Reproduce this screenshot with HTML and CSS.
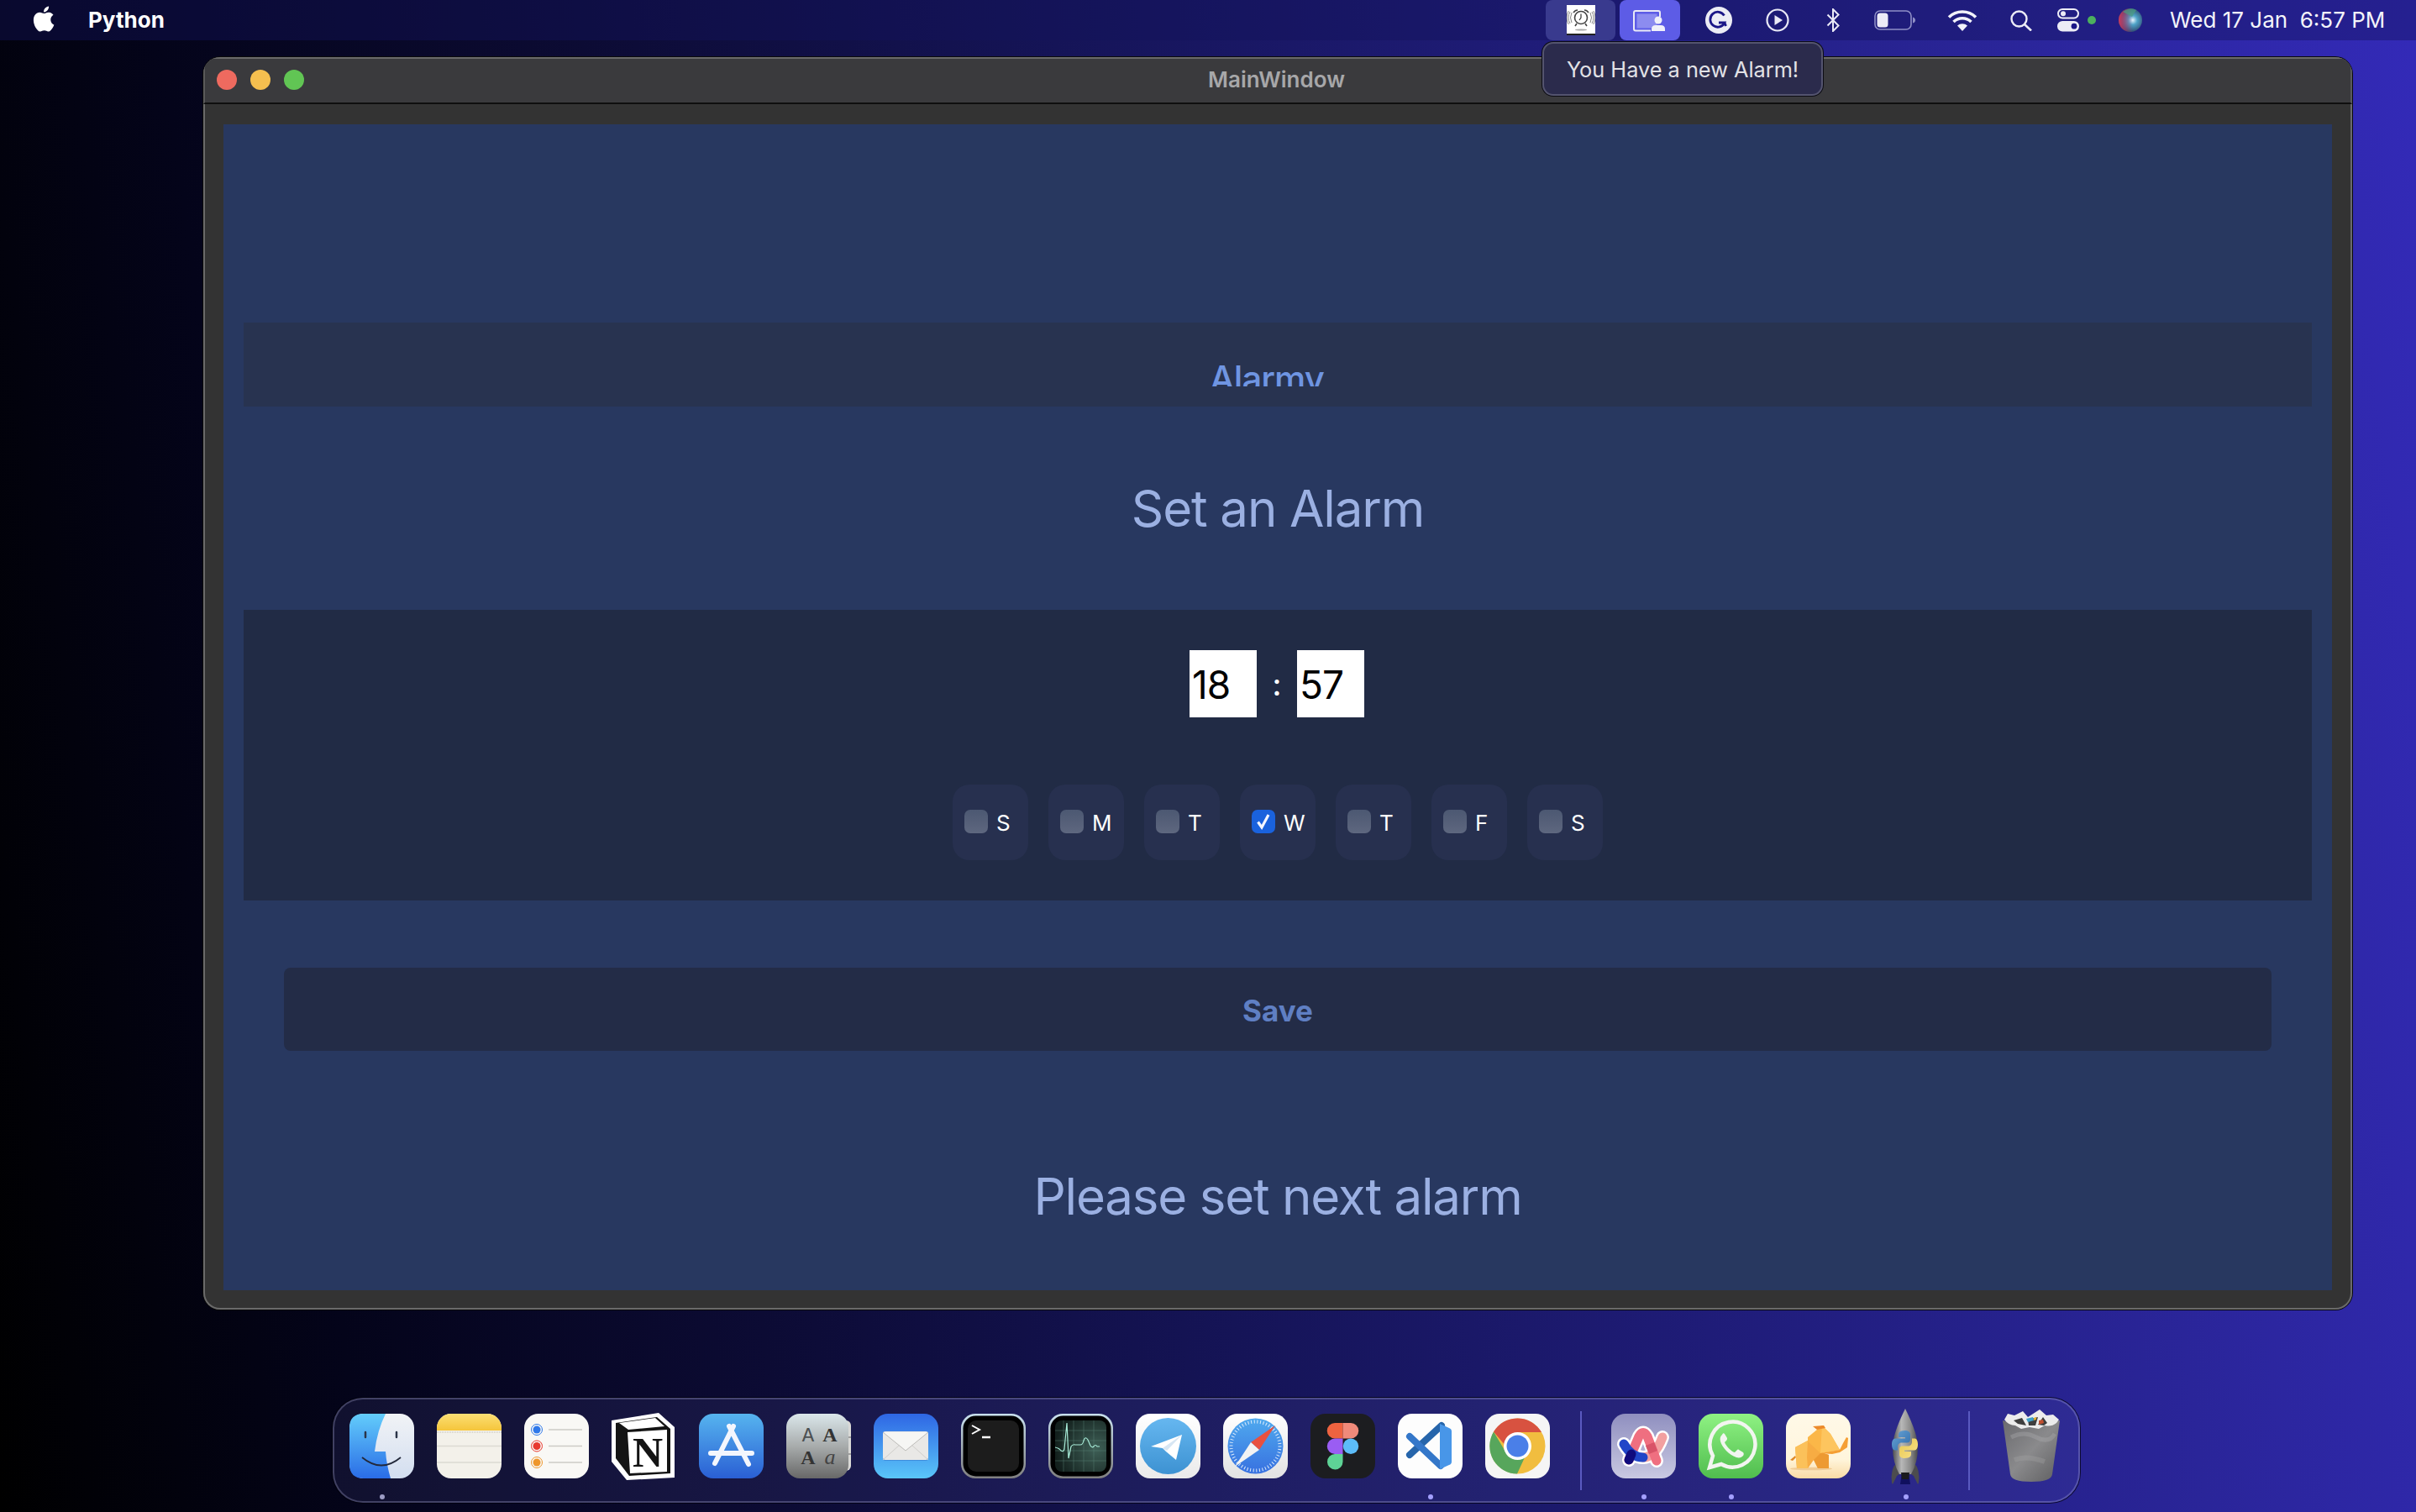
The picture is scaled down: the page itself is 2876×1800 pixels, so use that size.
FILE: index.html
```html
<!DOCTYPE html>
<html lang="en">
<head>
<meta charset="utf-8">
<title>MainWindow</title>
<link rel="stylesheet" href="styles.css">
</head>
<body>
<div class="screen">
  <header class="menubar">
    <svg class="apple" viewBox="2.6 1.8 18.6 20.4"><path fill="#fff" d="M18.71 19.5c-.83 1.24-1.71 2.45-3.05 2.47-1.34.03-1.77-.79-3.29-.79-1.53 0-2 .77-3.27.82-1.31.05-2.3-1.32-3.14-2.53C4.25 17 2.94 12.45 4.7 9.39c.87-1.52 2.43-2.48 4.12-2.51 1.28-.02 2.5.87 3.29.87.78 0 2.26-1.07 3.81-.91.65.03 2.47.26 3.64 1.98-.09.06-2.17 1.28-2.15 3.81.03 3.02 2.65 4.03 2.68 4.04-.03.07-.42 1.44-1.38 2.83M13 3.5c.73-.83 1.94-1.46 2.94-1.5.13 1.17-.34 2.35-1.04 3.19-.69.85-1.83 1.51-2.95 1.42-.15-1.15.41-2.35 1.05-3.11z"/></svg>
    <span class="app-name">Python</span>
    <div class="status">
      <div class="status-btn alarm-btn">
        <svg width="34" height="36" viewBox="0 0 34 36">
          <rect width="34" height="36" fill="#fff"/>
          <rect y="34" width="34" height="2" fill="#222"/>
          <ellipse cx="17" cy="29.5" rx="7" ry="1" fill="#aaa"/>
          <circle cx="17" cy="15" r="7.5" fill="none" stroke="#444" stroke-width="1.6"/>
          <path d="M17 10.5V15l-2 3" fill="none" stroke="#333" stroke-width="1.2"/>
          <path d="M8 9q2-3 5-3M26 9q-2-3-5-3M12 22l-2 3M22 22l2 3" fill="none" stroke="#444" stroke-width="1.6"/>
          <path d="M6 9q-3 6 0 12M4 8q-4 7 0 14M28 9q3 6 0 12M30 8q4 7 0 14M2.200 7q-4.500 8 0 16M31.800 7q4.500 8 0 16" fill="none" stroke="#777" stroke-width="0.9"/>
        </svg>
      </div>
      <div class="status-btn share-btn">
        <svg width="40" height="26" viewBox="0 0 40 26">
          <path d="M21 24.500H3q-2 0-2-2V3q0-2 2-2h27q2 0 2 2v5" fill="none" stroke="#e9e9f6" stroke-width="2"/>
          <rect x="4.500" y="4.500" width="24" height="17" fill="#8c8cf0"/>
          <circle cx="30" cy="12" r="4.500" fill="#f0f0fa"/>
          <path d="M22 25v-2.500q0-4.500 5-4.500h6q5 0 5 4.500V25z" fill="#f0f0fa"/>
        </svg>
      </div>
      <div class="slot slot-g">
        <svg width="32" height="32" viewBox="0 0 32 32"><circle cx="16" cy="16" r="16" fill="#ececf5"/><path d="M22.500 10.500A9 9 0 1 0 23 19h-7M23 19l1.500 4" fill="none" stroke="#1b1687" stroke-width="2.800"/></svg>
      </div>
      <div class="slot slot-play">
        <svg width="28" height="28" viewBox="0 0 28 28"><circle cx="14" cy="14" r="12.500" fill="none" stroke="#e9e9f6" stroke-width="2.200"/><path d="M10.500 8l9.500 6-9.500 6z" fill="#e9e9f6"/></svg>
      </div>
      <div class="slot slot-bt">
        <svg width="16" height="28" viewBox="0 0 16 28"><path d="M1.500 7.500l13 13L8 27V1l6.500 6.500-13 13" fill="none" stroke="#e9e9f6" stroke-width="2"/></svg>
      </div>
      <div class="slot slot-bat">
        <svg width="50" height="24" viewBox="0 0 50 24"><rect x="1" y="1" width="43" height="22" rx="6" fill="none" stroke="#8f8fc6" stroke-width="1.600"/><rect x="3.500" y="3.500" width="13" height="17" rx="3.500" fill="#ecebf6"/><path d="M46 8.500q3 1 3 3.500t-3 3.500z" fill="#8f8fc6"/></svg>
      </div>
      <div class="slot slot-wifi">
        <svg width="36" height="26" viewBox="0 0 36 26"><path d="M2 9.500a23 23 0 0 1 32 0M7.500 15a15 15 0 0 1 21 0" fill="none" stroke="#f2f2fa" stroke-width="3.600"/><path d="M12 19.500a9 9 0 0 1 12 0L18 26z" fill="#f2f2fa"/></svg>
      </div>
      <div class="slot slot-search">
        <svg width="26" height="25" viewBox="0 0 26 25"><circle cx="10.500" cy="10.500" r="9" fill="none" stroke="#ececf6" stroke-width="2.400"/><path d="M17 17l8 7.500" stroke="#ececf6" stroke-width="2.600"/></svg>
      </div>
      <div class="slot slot-ctl">
        <svg width="47" height="28" viewBox="0 0 47 28"><rect x="1" y="1" width="24" height="10.500" rx="5.200" fill="none" stroke="#ececf6" stroke-width="2"/><circle cx="7" cy="6.300" r="3" fill="#ececf6"/><rect y="15" width="26" height="12.500" rx="6.200" fill="#ececf6"/><circle cx="20" cy="21.200" r="3.400" fill="#1b1687"/><circle cx="41" cy="14" r="5" fill="#4cb05e"/></svg>
      </div>
      <div class="slot slot-siri">
        <svg width="28" height="28" viewBox="0 0 28 28">
          <defs>
            <radialGradient id="siri1" cx="0.6" cy="0.5" r="0.55"><stop offset="0" stop-color="#e8f6ff"/><stop offset="0.35" stop-color="#4fa4c8"/><stop offset="1" stop-color="#2a3d63"/></radialGradient>
            <linearGradient id="siri2" x1="0" y1="0" x2="1" y2="0"><stop offset="0" stop-color="#d63a5c" stop-opacity="0.95"/><stop offset="0.6" stop-color="#b03a7c" stop-opacity="0"/></linearGradient>
          </defs>
          <circle cx="14" cy="14" r="14" fill="url(#siri1)"/><circle cx="14" cy="14" r="14" fill="url(#siri2)"/><path d="M5 4a14 14 0 0 1 16-2l-5 8z" fill="#4c9e80" opacity="0.7"/>
        </svg>
      </div>
      <span class="clock">Wed 17 Jan&nbsp; 6:57 PM</span>
    </div>
    <div class="tooltip">You Have a new Alarm!</div>
  </header>

  <main class="window">
    <div class="titlebar">
      <div class="lights"><i class="light red"></i><i class="light yellow"></i><i class="light green"></i></div>
      <span class="title">MainWindow</span>
    </div>
    <div class="client">
      <div class="content">
        <div class="brand-bar"><div class="brand-clip"><span class="brand">Alarmy</span></div></div>
        <h1 class="heading">Set an Alarm</h1>
        <section class="panel">
          <div class="time-row">
            <div class="time-field">18</div>
            <span class="colon">:</span>
            <div class="time-field">57</div>
          </div>
          <div class="days">
            <div class="day"><span class="check"></span><span class="day-label">S</span></div>
            <div class="day"><span class="check"></span><span class="day-label">M</span></div>
            <div class="day"><span class="check"></span><span class="day-label">T</span></div>
            <div class="day"><span class="check checked"><svg width="28" height="28" viewBox="0 0 28 28"><path d="M7.500 14.500l4.500 6.500L20 6" fill="none" stroke="#f4f6ff" stroke-width="3.200"/></svg></span><span class="day-label">W</span></div>
            <div class="day"><span class="check"></span><span class="day-label">T</span></div>
            <div class="day"><span class="check"></span><span class="day-label">F</span></div>
            <div class="day"><span class="check"></span><span class="day-label">S</span></div>
          </div>
        </section>
        <div class="save">Save</div>
        <p class="next">Please set next alarm</p>
      </div>
    </div>
  </main>

  <nav class="dock">
    <div class="item"><svg class="icon" viewBox="0 0 77 77">
      <defs><linearGradient id="fb" x1="0" y1="0" x2="0" y2="1"><stop offset="0" stop-color="#63cdfb"/><stop offset="1" stop-color="#2a6ce6"/></linearGradient><linearGradient id="fw" x1="0" y1="0" x2="0" y2="1"><stop offset="0" stop-color="#f1f3f6"/><stop offset="1" stop-color="#d3def0"/></linearGradient></defs>
      <rect width="77" height="77" rx="17" fill="url(#fw)"/>
      <path d="M43 0H17Q0 0 0 17v43q0 17 17 17h32Q44 60 43 45H30Q33 20 43 0z" fill="url(#fb)"/>
      <path d="M19 22v6M56 22v6" stroke="#2b3448" stroke-width="2.500" stroke-linecap="round"/>
      <path d="M15 52q23 19 46 0" fill="none" stroke="#23293a" stroke-width="1.800"/>
    </svg><i class="dot dim"></i></div>

    <div class="item"><svg class="icon" viewBox="0 0 77 77">
      <defs><clipPath id="nc"><rect width="77" height="77" rx="17"/></clipPath><linearGradient id="ny" x1="0" y1="0" x2="0" y2="1"><stop offset="0" stop-color="#fbdf74"/><stop offset="1" stop-color="#f5c53b"/></linearGradient></defs>
      <g clip-path="url(#nc)"><rect width="77" height="77" fill="#f3f1ea"/><rect width="77" height="20" fill="url(#ny)"/><path d="M0 22h77" stroke="#cfccc2" stroke-width="1.500" stroke-dasharray="1 1"/><path d="M0 38.500h77M0 58h77" stroke="#dcdad2" stroke-width="1.500"/></g>
    </svg></div>

    <div class="item"><svg class="icon" viewBox="0 0 77 77">
      <rect width="77" height="77" rx="17" fill="#f9f8f5"/>
      <circle cx="15" cy="19" r="6.500" fill="none" stroke="#2f78ea" stroke-width="1"/><circle cx="15" cy="19" r="4.500" fill="#2f78ea"/>
      <circle cx="15" cy="38.500" r="6.500" fill="none" stroke="#e8392f" stroke-width="1"/><circle cx="15" cy="38.500" r="4.500" fill="#e8392f"/>
      <circle cx="15" cy="58" r="6.500" fill="none" stroke="#ee962b" stroke-width="1"/><circle cx="15" cy="58" r="4.500" fill="#ee962b"/>
      <path d="M29 19h40M29 38.500h40M29 58h40" stroke="#cdcbc6" stroke-width="1.500"/>
    </svg></div>

    <div class="item"><svg class="icon" viewBox="0 0 77 77">
      <path d="M0 8L56-1l19 17v60l-57 3L0 57z" fill="#fff"/>
      <path d="M5 11L54 4l16 14v53l-49 3L5 53z" fill="#141414"/>
      <path d="M9 11l43-6 11 10-43 4z" fill="#fff"/>
      <path d="M19 22l47-3v50l-44 2z" fill="#fff"/>
      <text class="notion-n" x="43" y="63" text-anchor="middle">N</text>
    </svg></div>

    <div class="item"><svg class="icon" viewBox="0 0 77 77">
      <defs><linearGradient id="as" x1="0" y1="0" x2="0" y2="1"><stop offset="0" stop-color="#56b4ef"/><stop offset="1" stop-color="#2a5fd4"/></linearGradient></defs>
      <rect width="77" height="77" rx="17" fill="url(#as)"/>
      <path d="M36 15L59 60M19 59l22-44M14 47h49" stroke="#f3f6fd" stroke-width="6" stroke-linecap="round"/>
    </svg></div>

    <div class="item"><svg class="icon" viewBox="0 0 77 77">
      <defs><linearGradient id="fbk" x1="0" y1="0" x2="0" y2="1"><stop offset="0" stop-color="#dbe7eb"/><stop offset="0.5" stop-color="#a8acac"/><stop offset="1" stop-color="#686868"/></linearGradient></defs>
      <rect x="60" y="8" width="17" height="60" rx="6" fill="#d9d9d6"/>
      <path d="M70 28h7M70 48h7" stroke="#666" stroke-width="1"/>
      <rect width="74" height="77" rx="16" fill="url(#fbk)"/>
      <text class="fb-thin" x="26" y="33" text-anchor="middle">A</text>
      <text class="fb-bold" x="52" y="33" text-anchor="middle">A</text>
      <text class="fb-bold" x="26" y="60" text-anchor="middle">A</text>
      <text class="fb-italic" x="52" y="60" text-anchor="middle">a</text>
    </svg></div>

    <div class="item"><svg class="icon" viewBox="0 0 77 77">
      <defs><linearGradient id="ml" x1="0" y1="0" x2="0" y2="1"><stop offset="0" stop-color="#2e66e4"/><stop offset="1" stop-color="#5ac6f9"/></linearGradient></defs>
      <rect width="77" height="77" rx="17" fill="url(#ml)"/>
      <rect x="11" y="22" width="54" height="34" rx="3" fill="#1f4aa8" opacity="0.3"/>
      <rect x="11" y="21" width="54" height="34" rx="3" fill="#e9e8e6"/>
      <path d="M11 22l27 22 27-22" fill="#f6f6f4" stroke="#bdbcb9" stroke-width="1"/>
      <path d="M11 55l20-18M65 55L45 37" stroke="#cfcecb" stroke-width="1"/>
    </svg></div>

    <div class="item"><svg class="icon" viewBox="0 0 77 77">
      <defs><linearGradient id="tb" x1="0" y1="0" x2="0" y2="1"><stop offset="0" stop-color="#c8e0ee"/><stop offset="1" stop-color="#808080"/></linearGradient></defs>
      <rect width="77" height="77" rx="17" fill="url(#tb)"/><rect x="2.500" y="2.500" width="72" height="72" rx="15" fill="#000"/><rect x="8" y="8" width="61" height="61" rx="10" fill="#1c1c1c"/>
      <path d="M13 14l9 5-9 5" fill="none" stroke="#fff" stroke-width="2"/><path d="M25 28h10" stroke="#fff" stroke-width="2.500"/>
    </svg></div>

    <div class="item"><svg class="icon" viewBox="0 0 77 77">
      <defs><linearGradient id="mb" x1="0" y1="0" x2="0" y2="1"><stop offset="0" stop-color="#c8e0ee"/><stop offset="1" stop-color="#808080"/></linearGradient><radialGradient id="mg" cx="0.8" cy="0.55" r="0.8"><stop offset="0" stop-color="#3e5f56"/><stop offset="1" stop-color="#13201d"/></radialGradient></defs>
      <rect width="77" height="77" rx="17" fill="url(#mb)"/><rect x="2.500" y="2.500" width="72" height="72" rx="15" fill="#000"/><rect x="8" y="8" width="61" height="61" rx="8" fill="url(#mg)"/>
      <path d="M8 20h61M8 32h61M8 44h61M8 56h61M18 8v61M30 8v61M42 8v61M54 8v61" stroke="#5e8a7c" stroke-width="0.600" opacity="0.7"/>
      <path d="M8 40q5 1 7 4 3 2 4-2l3-31 2 42 3-14q2-3 5-2h6q3 0 4-5 2-6 5-1l3 7q2 3 4 1 2-3 4 0h3" fill="none" stroke="#a8ecd8" stroke-width="1.200"/>
    </svg></div>

    <div class="item"><svg class="icon" viewBox="0 0 77 77">
      <defs><linearGradient id="tw" x1="0" y1="0" x2="0" y2="1"><stop offset="0" stop-color="#fff"/><stop offset="1" stop-color="#eaeaea"/></linearGradient><linearGradient id="tg" x1="0" y1="0" x2="0" y2="1"><stop offset="0" stop-color="#66b7f0"/><stop offset="1" stop-color="#3d92d2"/></linearGradient></defs>
      <rect width="77" height="77" rx="17" fill="url(#tw)"/><circle cx="38.500" cy="38.500" r="33.500" fill="url(#tg)"/>
      <path d="M18 39l37-14-7 30-12-10-4-4z" fill="#fff"/><path d="M32 41l23-16-18 19z" fill="#d7e6f3"/>
    </svg></div>

    <div class="item"><svg class="icon" viewBox="0 0 77 77">
      <defs><linearGradient id="sw" x1="0" y1="0" x2="0" y2="1"><stop offset="0" stop-color="#fff"/><stop offset="1" stop-color="#e2e2e2"/></linearGradient><linearGradient id="sb" x1="0" y1="0" x2="0" y2="1"><stop offset="0" stop-color="#4fa9ee"/><stop offset="1" stop-color="#3871e0"/></linearGradient></defs>
      <rect width="77" height="77" rx="17" fill="url(#sw)"/><circle cx="38.500" cy="38.500" r="33" fill="url(#sb)"/>
      <circle cx="38.500" cy="38.500" r="29" fill="none" stroke="#dcebfb" stroke-width="4" stroke-dasharray="1 2.640"/>
      <path d="M62 14L33 34l10 9z" fill="#e8503f"/><path d="M14 63l29-20-10-9z" fill="#f3f3f3"/>
    </svg></div>

    <div class="item"><svg class="icon" viewBox="0 0 77 77">
      <rect width="77" height="77" rx="18" fill="#1c1d20"/>
      <path d="M38.500 11H29a9.250 9.250 0 0 0 0 18.500h9.500z" fill="#ee6340"/>
      <path d="M38.500 11H48a9.250 9.250 0 0 1 0 18.500h-9.500z" fill="#ef8a7a"/>
      <path d="M38.500 29.500H29a9.250 9.250 0 0 0 0 18.500h9.500z" fill="#9a5df3"/>
      <circle cx="48" cy="38.750" r="9.250" fill="#5cbcf9"/>
      <path d="M38.500 48H29a9.250 9.250 0 1 0 9.500 9.250z" fill="#5ed396"/>
    </svg></div>

    <div class="item"><svg class="icon" viewBox="0 0 77 77">
      <rect width="77" height="77" rx="17" fill="#fdfdfd"/>
      <path d="M52 14L14 49" stroke="#2665ab" stroke-width="8" stroke-linecap="round"/>
      <path d="M14 27l37 35" stroke="#3477c9" stroke-width="8" stroke-linecap="round"/>
      <path d="M50 12l11 5q3 1 3 4v36q0 3-3 4l-11 5z" fill="#4896e8"/>
    </svg><i class="dot"></i></div>

    <div class="item"><svg class="icon" viewBox="0 0 77 77">
      <rect width="77" height="77" rx="17" fill="#f5f5f5"/>
      <circle cx="38.500" cy="38.500" r="33" fill="#f1bd3f"/>
      <path d="M10 21.500A33 33 0 0 0 38 71.500L47 52 24 45z" fill="#57a65c"/>
      <path d="M10 21.500A33 33 0 0 1 67 22H38L24 38z" fill="#d85240"/>
      <circle cx="38.500" cy="38.500" r="16.500" fill="#fff"/><circle cx="38.500" cy="38.500" r="13" fill="#4a7fe8"/>
    </svg></div>

    <div class="sep"><i class="sep-line"></i></div>

    <div class="item"><svg class="icon" viewBox="0 0 77 77">
      <defs><linearGradient id="arc" x1="0" y1="0" x2="0" y2="1"><stop offset="0" stop-color="#8f8fbf"/><stop offset="1" stop-color="#c9c9e2"/></linearGradient></defs>
      <rect width="77" height="77" rx="17" fill="url(#arc)"/>
      <g fill="none" stroke="#fff" stroke-width="16" stroke-linecap="round"><path d="M21 55L33 27Q38 18 43 27L54 56"/><path d="M15 36Q24 52 38 52 52 52 61 28"/></g>
      <path d="M38 52Q52 52 61 28" fill="none" stroke="#f2a0a0" stroke-width="11" stroke-linecap="round"/>
      <path d="M21 55L33 27Q38 18 43 27L54 56" fill="none" stroke="#ef6f80" stroke-width="11" stroke-linecap="round" stroke-linejoin="round"/>
      <path d="M15 36Q24 52 38 52" fill="none" stroke="#2146c8" stroke-width="11" stroke-linecap="round"/>
      <path d="M24 48L21 55" fill="none" stroke="#100b7e" stroke-width="11" stroke-linecap="round"/>
      <path d="M46 36L50 46" fill="none" stroke="#d85468" stroke-width="11"/>
    </svg><i class="dot"></i></div>

    <div class="item"><svg class="icon" viewBox="0 0 77 77">
      <defs><linearGradient id="wa" x1="0" y1="0" x2="0" y2="1"><stop offset="0" stop-color="#8ff283"/><stop offset="1" stop-color="#50bd4e"/></linearGradient></defs>
      <rect width="77" height="77" rx="17" fill="url(#wa)"/>
      <path d="M13 64l4-14A27 27 0 1 1 27 60z" fill="none" stroke="#f2f5f0" stroke-width="4.500"/>
      <path d="M28 25c-2 2-3 4-2 8 2 7 10 16 19 19 4 1 6 0 8-2 1-1 1-3 0-4l-5-3c-1-1-2 0-3 1l-2 2c-4-1-10-7-12-12l2-2c1-1 1-2 1-3l-3-5c-1-1-2-1-3 1z" fill="#f2f5f0"/>
    </svg><i class="dot"></i></div>

    <div class="item"><svg class="icon" viewBox="0 0 77 77">
      <defs><linearGradient id="tp" x1="0" y1="0" x2="0" y2="1"><stop offset="0" stop-color="#fff9e8"/><stop offset="0.7" stop-color="#fff5dc"/><stop offset="1" stop-color="#fadba5"/></linearGradient></defs>
      <rect width="77" height="77" rx="17" fill="url(#tp)"/>
      <ellipse cx="30" cy="65.500" rx="25" ry="1.800" fill="#e8b777" opacity="0.6"/>
      <path d="M5 55l6-5 1 2-4 4z" fill="#e08a28"/>
      <path d="M11 40l15-8 16 14 9 3v16H38l-5-10-7 10H13l-1-12z" fill="#f7ac43"/>
      <path d="M11 40l15-8-1 20 1 13H13l-1-12z" fill="#fbc15a"/>
      <path d="M38 65l-5-10 9-9 9 3v16z" fill="#ed9a32"/>
      <path d="M26 28l17-14 10 10 11 19-23 4-15-14z" fill="#fbb748"/>
      <path d="M43 14l10 10 11 19-23 4z" fill="#fdc55e"/>
      <path d="M32 15l13-1 2 3-10 2z" fill="#ec8a2a"/>
      <path d="M64 43l4-8 4-7 2 1-1 11-9 6-9 2-14-1z" fill="#f59f34"/>
    </svg></div>

    <div class="item"><svg class="icon" viewBox="0 0 77 77">
      <defs>
        <linearGradient id="rk" x1="0" y1="0" x2="1" y2="0"><stop offset="0" stop-color="#4e4e50"/><stop offset="0.35" stop-color="#b8b8b8"/><stop offset="0.7" stop-color="#8c8c8c"/><stop offset="1" stop-color="#4a4a4c"/></linearGradient>
        <linearGradient id="pb" x1="0" y1="0" x2="1" y2="1"><stop offset="0" stop-color="#6aa6d8"/><stop offset="1" stop-color="#2f6aa8"/></linearGradient>
        <linearGradient id="py" x1="0" y1="0" x2="1" y2="1"><stop offset="0" stop-color="#f8e08a"/><stop offset="1" stop-color="#e8c84e"/></linearGradient>
      </defs>
      <path d="M32 84h12l-2-14H34z" fill="#10105e"/>
      <path d="M28 58Q20 66 22 82l1 2 5-10 3-2zM48 58q8 8 6 24l-1 2-5-10-3-2z" fill="#4c4c4e"/>
      <path d="M38-6q-15 30-15 46 0 18 8 32h14q8-14 8-32 0-16-15-46z" fill="url(#rk)"/>
      <path d="M33 70h10l-1 8h-8z" fill="#1a1a1c"/>
      <path d="M38 20c-7 0-8 3-8 5v3h8v1.500H26c-2.500 0-4 3-4 7s1.500 7 3.500 7H29v-4c0-3 2-5 5-5h6c3 0 4-2 4-4v-6c0-3-3-4.500-6-4.500z" fill="url(#pb)"/>
      <path d="M38 20c-7 0-8 3-8 5v3h8v1.500H26c-2.500 0-4 3-4 7s1.500 7 3.500 7H29v-4c0-3 2-5 5-5h6c3 0 4-2 4-4v-6c0-3-3-4.500-6-4.500z" fill="url(#py)" transform="rotate(180 37.500 36.500)"/>
    </svg><i class="dot"></i></div>

    <div class="sep"><i class="sep-line"></i></div>

    <div class="item"><svg class="icon" viewBox="0 0 77 77">
      <defs><linearGradient id="tr" x1="0" y1="0" x2="1" y2="1"><stop offset="0" stop-color="#6a6a6e"/><stop offset="0.5" stop-color="#8a8a8c"/><stop offset="1" stop-color="#5e5e60"/></linearGradient></defs>
      <path d="M4 8q34 10 68 0L63 72q-1 9-25 9t-25-9z" fill="url(#tr)"/>
      <path d="M14 28q15-8 30 0t22-4" fill="none" stroke="#b0b0b2" stroke-width="5" opacity="0.35"/>
      <path d="M18 55q14-6 36 2" fill="none" stroke="#a8a8aa" stroke-width="6" opacity="0.3"/>
      <path d="M6 7l4-7 8 2 10-5 6 7 14-9 8 7 8-1 7 6-3 4q-6 5-14 3l-7 4-11-2-10 2-7-4q-8 0-13-7z" fill="#ececec"/>
      <path d="M17 8l10-3 5 9-10-2zM34 7l12-3-3 10-8 0zM46 13l6-9 5 7-4 3z" fill="#3e3e3e"/>
      <path d="M32 6l8-2 1 4-7 2z" fill="#3fa0c8"/><path d="M47 8l5-1 1 4-6 2z" fill="#c05030"/><path d="M41 5l3-1 0 3-3 1z" fill="#e0b030"/>
    </svg></div>
  </nav>
</div>
</body>
</html>
```

FILE: styles.css
```css
* { box-sizing: border-box; }
html, body { margin: 0; padding: 0; }
body { width: 2876px; height: 1800px; overflow: hidden; font-family: "Inter", "Liberation Sans", sans-serif; }

.screen {
  width: 2876px; height: 1800px;
  display: flex; flex-direction: column;
  background: linear-gradient(82deg, #000 0%, #04041a 14%, #0c0b34 30%, #151457 48%, #1f1c78 66%, #2a2599 84%, #332ab8 100%);
}

/* menu bar */
.menubar {
  position: relative;
  height: 48px; flex: none;
  display: flex; align-items: center;
  padding: 0 38px;
  background: rgba(20, 20, 90, 0.42);
  color: #fff;
}
.apple { width: 28px; height: 31px; margin-bottom: 3px; flex: none; }
.app-name { margin-left: 39px; font-size: 26px; font-weight: 700; margin-bottom: 2px; }
.status { margin-left: auto; display: flex; align-items: center; height: 48px; }
.status-btn { height: 48px; display: flex; align-items: center; justify-content: center; border-radius: 8px; flex: none; }
.alarm-btn { width: 83px; margin-right: 5px; background: #393a8e; }
.share-btn { width: 72px; background: #5d5ce6; padding-top: 1px; }
.slot { height: 48px; display: flex; align-items: center; justify-content: center; flex: none; }
.slot-g { width: 92px; }
.slot-play { width: 48px; }
.slot-bt { width: 84px; }
.slot-bat { width: 64px; }
.slot-wifi { width: 96px; }
.slot-search { width: 43px; }
.slot-ctl { width: 90px; }
.slot-siri { width: 38px; }
.clock { width: 283px; padding-left: 28px; font-size: 26px; white-space: nowrap; color: #f4f4fa; margin-bottom: 1px; }

.tooltip {
  position: absolute; left: 1836px; top: 50px;
  width: 334px; height: 64px;
  display: flex; align-items: center; justify-content: center;
  background: #2b2b4c;
  border: 2px solid #54546f;
  border-radius: 13px;
  box-shadow: 0 0 0 1px #0c0c14;
  color: #e2e2e6;
  font-size: 25.300px;
  z-index: 3;
}

/* window */
.window {
  width: 2558px; height: 1491px;
  margin: 20px 0 0 242px;
  flex: none;
  display: flex; flex-direction: column;
  background: #333333;
  border-radius: 20px;
  box-shadow: inset 0 0 0 2px #6a6a6a, 0 0 0 1px #0a0a0a;
  overflow: hidden;
}
.titlebar {
  height: 56px; flex: none;
  position: relative;
  display: flex; align-items: center; justify-content: center;
  padding-bottom: 3px;
  background: #3a3a3d;
  border-top: 2px solid #6a6a6a;
  border-left: 2px solid #5a5a5a;
  border-right: 2px solid #5a5a5a;
  border-bottom: 2px solid #0f0f0f;
}
.lights { position: absolute; left: 14px; top: 13px; display: flex; gap: 16px; }
.light { width: 24px; height: 24px; border-radius: 50%; display: block; }
.red { background: #ee6a5f; }
.yellow { background: #f5bf4f; }
.green { background: #61c554; }
.title { font-size: 26px; font-weight: 600; color: #a7a7a9; margin-left: -3px; }

.client { flex: 1; padding: 24px 24px 23px; display: flex; }
.content { flex: 1; background: #283860; display: flex; flex-direction: column; padding: 236px 24px 0; }

.brand-bar { height: 100px; background: #283350; flex: none; }
.brand-clip { height: 76px; overflow: hidden; text-align: center; padding: 46px 26px 0 0; }
.brand { display: inline-block; font-size: 42px; line-height: 42px; font-weight: 500; letter-spacing: -1px; color: #6f95e2; }

.heading {
  margin: 0; height: 242px; flex: none;
  display: flex; align-items: center; justify-content: center;
  font-size: 60px; font-weight: 400; letter-spacing: -1.100px; color: #9bb0e2;
}

.panel {
  height: 346px; flex: none;
  background: #212b45;
  padding-top: 48px;
  display: flex; flex-direction: column; align-items: center; gap: 80px;
}
.time-row { display: flex; align-items: center; height: 80px; margin-right: 2px; }
.time-field {
  width: 80px; height: 80px;
  background: #fff; color: #000;
  font-size: 46px;
  line-height: 80px;
  letter-spacing: -1px;
  padding: 1px 0 0 3px;
}
.colon { width: 48px; text-align: center; color: #fff; font-size: 36px; font-weight: 500; padding-top: 2px; }
.days { display: flex; gap: 24px; }
.day {
  width: 90px; height: 90px;
  border-radius: 20px;
  background: #27304f;
  display: flex; align-items: center;
  padding-left: 14px; gap: 10px;
  color: #fff;
}
.check {
  width: 28px; height: 28px; flex: none;
  border-radius: 7px;
  margin-bottom: 2px;
  background: linear-gradient(180deg, #4c5872, #5e677f);
}
.check.checked { background: #1a62dd; }
.check svg { display: block; }
.day-label { font-size: 26px; }

.save {
  margin: 80px 48px 0;
  height: 99px; flex: none;
  border-radius: 8px;
  background: #232c47;
  display: flex; align-items: center; justify-content: center;
  padding-top: 2px;
  font-size: 35px; font-weight: 700; color: #5f7fc3;
}
.next {
  margin: 0; flex: 1;
  padding-top: 60px;
  display: flex; align-items: center; justify-content: center;
  font-size: 60px; letter-spacing: -1.200px; color: #9bb0e2;
}

/* dock */
.dock {
  width: 2080px; height: 125px;
  margin: 105px 0 0 396px;
  flex: none;
  display: flex; gap: 27px;
  padding: 17px 0 0 18px;
  border: 2px solid rgba(190, 190, 235, 0.28);
  border-radius: 36px;
  background: rgba(90, 90, 170, 0.16);
  box-shadow: 0 0 0 1px rgba(0, 0, 10, 0.7);
}
.item { width: 77px; flex: none; display: flex; flex-direction: column; align-items: center; }
.icon { width: 77px; height: 77px; display: block; overflow: visible; flex: none; }
.dot { display: block; width: 6px; height: 6px; border-radius: 50%; margin-top: 19px; background: #a4a0ff; }
.dot.dim { background: #9c9cc4; }
.sep { width: 19px; height: 94px; flex: none; display: flex; justify-content: center; margin-top: -3px; }
.sep-line { width: 2px; height: 94px; background: #5a5ac0; display: block; }

.notion-n { font-family: "Liberation Serif", serif; font-weight: 700; font-size: 50px; fill: #141414; }
.fb-thin { font-family: "Liberation Mono", monospace; font-size: 24px; fill: #4c5052; }
.fb-bold { font-family: "Liberation Serif", serif; font-weight: 700; font-size: 24px; fill: #333; }
.fb-italic { font-family: "Liberation Serif", serif; font-style: italic; font-size: 26px; fill: #444; }
```
